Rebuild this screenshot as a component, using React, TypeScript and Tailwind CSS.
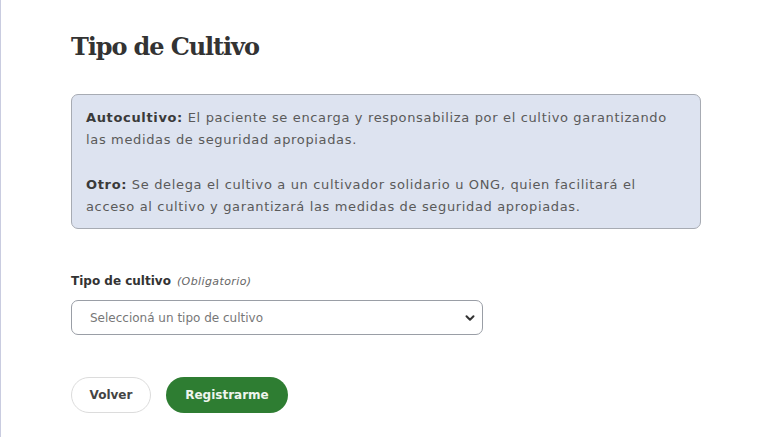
import React, { useState } from "react";

export default function App() {
  const [tipo, setTipo] = useState("");

  return (
    <div className="w-full h-[437px] bg-white border-l border-[#c9cce0] overflow-hidden">
      <div className="pl-[70px] pt-[31px] w-[700px]">
        <h1 className="text-[24px] leading-[32px] font-bold text-[#333] font-['DejaVu_Serif',serif] tracking-[-1.1px]">
          Tipo de Cultivo
        </h1>

        <div className="mt-[31px] rounded-[7px] border border-[#a7abb3] bg-[#dde3f0] pl-[14px] pr-[18px] pt-3 pb-[10px] text-[13px] leading-[22px] tracking-[0.65px] text-[#5a5a5a] font-['DejaVu_Sans',sans-serif]">
          <p>
            <strong className="text-[#3a3a3a] font-bold">Autocultivo:</strong> El paciente se encarga y
            responsabiliza por el cultivo garantizando las medidas de seguridad apropiadas.
          </p>
          <p className="mt-[23px]">
            <strong className="text-[#3a3a3a] font-bold">Otro:</strong> Se delega el cultivo a un
            cultivador solidario u ONG, quien facilitará el acceso al cultivo y garantizará las
            medidas de seguridad apropiadas.
          </p>
        </div>

        <label className="mt-[43px] flex items-baseline gap-[6px] leading-[18px] font-['DejaVu_Sans',sans-serif]">
          <span className="text-[12px] font-bold text-[#333]">Tipo de cultivo</span>
          <span className="text-[11px] italic tracking-[0.4px] text-[#666]">(Obligatorio)</span>
        </label>

        <div className="relative mt-[9px] w-[412px]">
          <select
            value={tipo}
            onChange={(e) => setTipo(e.target.value)}
            className="w-full h-[35px] appearance-none rounded-[7px] border border-[#9a9ea6] bg-white pl-[18px] pr-8 text-[12px] text-[#777] font-['DejaVu_Sans',sans-serif] outline-none"
          >
            <option value="">Seleccioná un tipo de cultivo</option>
            <option value="autocultivo">Autocultivo</option>
            <option value="otro">Otro</option>
          </select>
          <svg
            className="pointer-events-none absolute right-[8px] top-1/2 -translate-y-1/2"
            width="10"
            height="10"
            viewBox="0 0 10 10"
            fill="none"
          >
            <path d="M1.5 3.2 L5 6.8 L8.5 3.2" stroke="#333" strokeWidth="2" strokeLinecap="round" strokeLinejoin="round" />
          </svg>
        </div>

        <div className="mt-[42px] flex gap-[15px] font-['DejaVu_Sans',sans-serif]">
          <button className="w-[80px] h-[36px] rounded-full border border-[#dcdcdc] bg-white text-[12px] font-bold text-[#444]">
            Volver
          </button>
          <button className="w-[122px] h-[36px] rounded-full bg-[#2e7d32] text-[12px] font-bold text-[#eef5ee]">
            Registrarme
          </button>
        </div>
      </div>
    </div>
  );
}
